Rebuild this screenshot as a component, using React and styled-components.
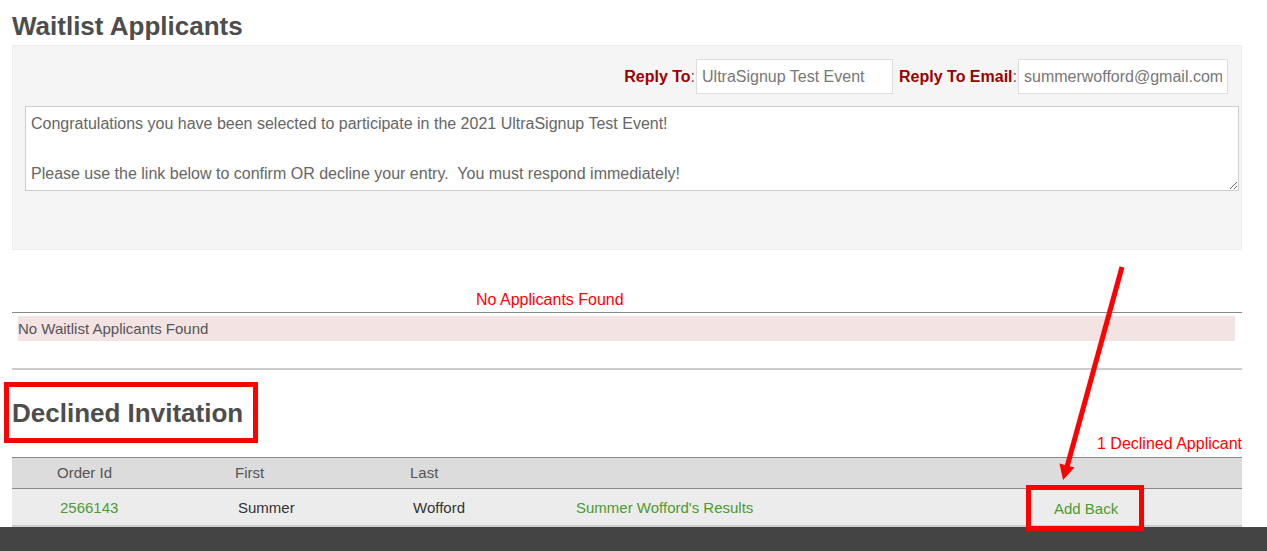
import styled, { createGlobalStyle } from 'styled-components';

const GlobalStyle = createGlobalStyle`
	html, body {
		margin: 0;
		padding: 0;
		overflow: hidden;
		background: #ffffff;
		font-family: "Liberation Sans", Arial, sans-serif;
	}
`;

const declined = [
	{ id: '2566143', first: 'Summer', last: 'Wofford' },
];

const message = `Congratulations you have been selected to participate in the 2021 UltraSignup Test Event!

Please use the link below to confirm OR decline your entry.  You must respond immediately!`;

// callout arrow drawn over the page, pointing at the Add Back link
const CalloutArrow = () => (
	<ArrowSvg width="80" height="230" viewBox="0 0 80 230">
		<line x1="72" y1="7" x2="17" y2="207" stroke="#ff0000" strokeWidth="5" />
		<polygon points="13,220 24.5,207.5 9.5,203.5" fill="#ff0000" />
	</ArrowSvg>
);

export default function App() {
	return (
		<>
			<GlobalStyle />
			<Page>
				<Title>Waitlist Applicants</Title>

				<Panel>
					<ReplyRow>
						<Label>Reply To</Label>:
						<TextInput $width={197} defaultValue="UltraSignup Test Event" />
						<Label $gap>Reply To Email</Label>:
						<TextInput $width={210} defaultValue="summerwofford@gmail.com" />
					</ReplyRow>
					<Message defaultValue={message} />
				</Panel>

				<Notice>No Applicants Found</Notice>
				<Rule />
				<EmptyRow>No Waitlist Applicants Found</EmptyRow>
				<Divider />

				<SectionHead>
					<Heading>Declined Invitation</Heading>
					<Count>1 Declined Applicant</Count>
				</SectionHead>

				<Table>
					<HeadCell>Order Id</HeadCell>
					<HeadCell>First</HeadCell>
					<HeadCell>Last</HeadCell>
					<HeadCell />
					<HeadCell />
					{declined.map((row) => (
						<Row key={row.id}>
							<Cell><Link>{row.id}</Link></Cell>
							<Cell>{row.first}</Cell>
							<Cell>{row.last}</Cell>
							<Cell><Link>{`${row.first} ${row.last}'s Results`}</Link></Cell>
							<Cell><AddBack>Add Back</AddBack></Cell>
						</Row>
					))}
				</Table>

				<CalloutArrow />
			</Page>
			<Footer />
		</>
	);
}


// STYLES

const Page = styled.div`
	position: relative;
	width: 1230px;
	padding: 11px 25px 0 12px;
`;

const Title = styled.h2`
	margin: 0 0 4px;
	font-size: 26px;
	line-height: 30px;
	font-weight: 700;
	color: #4d4d4d;
`;

const Panel = styled.div`
	box-sizing: border-box;
	height: 205px;
	padding: 13px 3px 0 12px;
	background-color: #f5f5f5;
	border: 1px solid #eeeeee;
`;

const ReplyRow = styled.div`
	display: flex;
	justify-content: flex-end;
	align-items: center;
	padding-right: 10px;
	height: 35px;
	font-size: 16px;
	color: #555;
`;

const Label = styled.span`
	margin-left: ${({ $gap }) => ($gap ? '6px' : '0')};
	font-weight: 700;
	color: #990000;
`;

const TextInput = styled.input`
	box-sizing: border-box;
	width: ${({ $width }) => $width}px;
	height: 35px;
	margin-left: 1px;
	padding: 0 5px;
	border: 1px solid #dddddd;
	background: #ffffff;
	font-family: "Liberation Sans", Arial, sans-serif;
	font-size: 16px;
	color: #777;
	outline: none;
`;

const Message = styled.textarea`
	display: block;
	box-sizing: border-box;
	width: 1214px;
	height: 85px;
	margin-top: 12px;
	padding: 4px 5px;
	border: 1px solid #cccccc;
	background: #ffffff;
	font-family: "Liberation Sans", Arial, sans-serif;
	font-size: 16px;
	line-height: 25px;
	color: #666;
	resize: vertical;
	overflow: hidden;
	outline: none;
`;

const Notice = styled.div`
	margin-top: 41px;
	padding-left: 464px;
	font-size: 16px;
	line-height: 18px;
	color: #ff0000;
`;

const Rule = styled.div`
	margin-top: 3px;
	height: 1px;
	background-color: #888888;
`;

const EmptyRow = styled.div`
	margin: 3px 7px 0 6px;
	height: 25px;
	line-height: 25px;
	font-size: 15px;
	color: #555;
	background-color: #f3e3e3;
`;

const Divider = styled.div`
	margin-top: 27px;
	height: 2px;
	background-color: #cccccc;
`;

const SectionHead = styled.div`
	display: flex;
	justify-content: space-between;
	align-items: flex-end;
	padding: 28px 0 4px;
`;

const Heading = styled.h2`
	position: relative;
	margin: 0 0 25px;
	font-size: 26px;
	line-height: 30px;
	font-weight: 700;
	color: #4d4d4d;

	&::before {
		content: '';
		position: absolute;
		inset: -16px -15px -15px -8px;
		border: 5px solid #ff0000;
	}
`;

const Count = styled.div`
	font-size: 16px;
	line-height: 18px;
	color: #ff0000;
`;

const Table = styled.div`
	display: grid;
	grid-template-columns: 178px 175px 163px 478px 236px;
	font-size: 15px;
`;

const HeadCell = styled.div`
	height: 30px;
	line-height: 30px;
	padding-left: 45px;
	color: #555;
	background-color: #dcdcdc;
	border-top: 1px solid #888888;
	border-bottom: 1px solid #888888;
`;

const Row = styled.div`
	display: contents;
`;

const Cell = styled.div`
	box-sizing: border-box;
	height: 38px;
	line-height: 36px;
	padding: 1px 0 0 48px;
	color: #333;
	background-color: #ececec;
	border-bottom: 2px solid #cccccc;
`;

const Link = styled.span`
	color: #4b9b30;
	cursor: pointer;
`;

const AddBack = styled(Link)`
	position: relative;
	display: inline-block;
	line-height: 18px;
	vertical-align: middle;

	&::before {
		content: '';
		position: absolute;
		inset: -15px -26px -13px -28px;
		border: 5px solid #ff0000;
	}
`;

const ArrowSvg = styled.svg`
	position: absolute;
	left: 1050px;
	top: 260px;
`;

const Footer = styled.div`
	height: 24px;
	background-color: #444444;
`;
